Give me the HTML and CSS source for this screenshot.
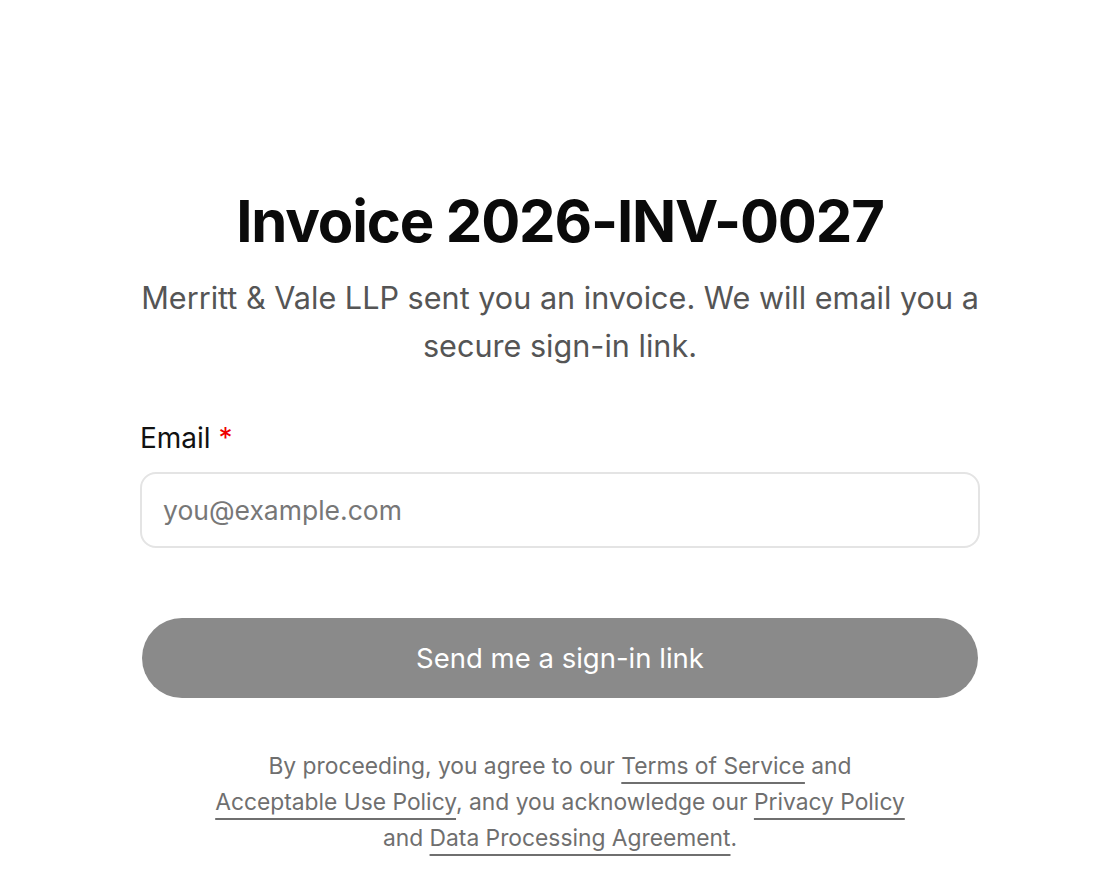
FILE: index.html
```html
<!DOCTYPE html>
<html lang="en">
<head>
    <meta charset="UTF-8">
    <meta name="viewport" content="width=device-width, initial-scale=1.0">
    <title>Invoice 2026-INV-0027</title>
    <link rel="stylesheet" href="styles.css">
</head>
<body>
    <main class="signin">
        <h1 class="signin-title">Invoice 2026-INV-0027</h1>
        <p class="signin-lead">Merritt &amp; Vale LLP sent you an invoice. We will email you a secure sign-in link.</p>

        <form class="signin-form">
            <label class="field-label" for="email">Email <span class="required">*</span></label>
            <input class="field-input" id="email" type="email" placeholder="you@example.com">
            <button class="send-button" type="submit" disabled>Send me a sign-in link</button>
        </form>

        <p class="legal">
            By proceeding, you agree to our <a href="#">Terms of Service</a> and<br>
            <a href="#">Acceptable Use Policy</a>, and you acknowledge our <a href="#">Privacy Policy</a><br>
            and <a href="#">Data Processing Agreement</a>.
        </p>
    </main>
</body>
</html>
```

FILE: styles.css
```css
body {
    margin: 0;
    background: #fff;
    color: #111;
    font-family: Inter, "Liberation Sans", Arial, sans-serif;
}

.signin {
    width: 840px;
    margin: 0 auto;
    padding-top: 186px;
    text-align: center;
}

.signin-title {
    margin: 0;
    font-size: 58px;
    line-height: 70px;
    font-weight: 700;
    letter-spacing: -0.02em;
    color: #0a0a0a;
}

.signin-lead {
    margin: 18px 0 0;
    font-size: 30.6px;
    line-height: 48px;
    color: #555;
}

.signin-form {
    margin-top: 52px;
    text-align: left;
}

.field-label {
    display: block;
    font-size: 28px;
    line-height: 32px;
    color: #111;
}

.required {
    color: #e00;
}

.field-input {
    display: block;
    box-sizing: border-box;
    width: 100%;
    height: 76px;
    margin-top: 18px;
    padding: 0 21px;
    border: 2px solid #e4e4e4;
    border-radius: 16px;
    font-family: inherit;
    font-size: 26.5px;
    color: #111;
    outline: none;
}

.field-input::placeholder {
    color: #777;
}

.send-button {
    display: block;
    width: 836px;
    height: 80px;
    margin: 70px auto 0;
    border: none;
    border-radius: 40px;
    background: #8a8a8a;
    color: #fff;
    font-family: inherit;
    font-size: 27.5px;
}

.legal {
    margin: 50px 0 0;
    font-size: 22.8px;
    line-height: 36px;
    color: #6f6f6f;
}

.legal a {
    color: inherit;
    text-decoration: underline;
    text-decoration-thickness: 2px;
    text-underline-offset: 8px;
}
```
